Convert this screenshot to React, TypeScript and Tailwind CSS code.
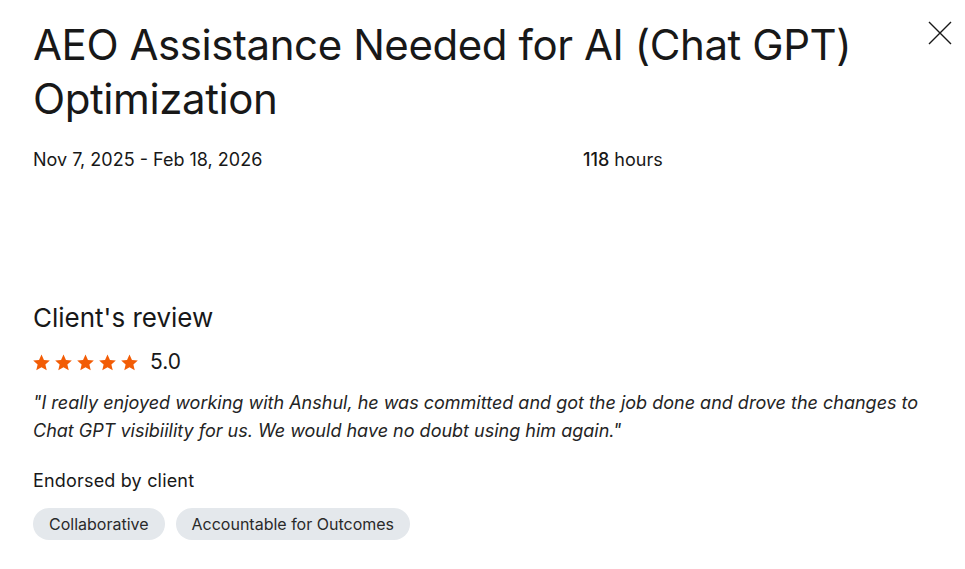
import React from 'react'

const Star: React.FC = () => (
  <svg viewBox="0 0 24 24" className="w-[19px] h-[19px]" fill="#f25c05">
    <path d="M12 1.8l3.1 6.9 7.4.7-5.6 5 1.7 7.4L12 17.9l-6.6 3.9 1.7-7.4-5.6-5 7.4-.7z" />
  </svg>
)

const App: React.FC = () => {
  const tags = ['Collaborative', 'Accountable for Outcomes']

  return (
    <div className="w-full min-h-screen bg-white text-[#181818] font-['Inter',sans-serif]">
      <div className="flex items-start justify-between pl-[33px] pr-[13px] pt-[18px]">
        <h1 className="text-[42px] leading-[54px] font-normal tracking-[-0.01em] max-w-[860px]">
          AEO Assistance Needed for AI (Chat GPT) Optimization
        </h1>
        {/* Close */}
        <button className="mt-[3px] text-[#181818]">
          <svg viewBox="0 0 24 24" className="w-[24px] h-[24px]" fill="none" stroke="currentColor" strokeWidth="1.4">
            <path d="M1 1l22 22M23 1L1 23" />
          </svg>
        </button>
      </div>

      <div className="grid grid-cols-[550px_1fr] px-[33px] mt-[22px] text-[18px] leading-[24px]">
        <span>Nov 7, 2025 - Feb 18, 2026</span>
        <span>
          <span className="font-medium">118</span> hours
        </span>
      </div>

      {/* Client's review */}
      <div className="px-[33px] mt-[130px]">
        <h2 className="text-[26px] leading-[32px] font-normal">Client's review</h2>
        <div className="flex items-center gap-[11px] mt-[16px]">
          <div className="flex gap-[3px] -ml-[1px]">
            {[0, 1, 2, 3, 4].map((i) => (
              <Star key={i} />
            ))}
          </div>
          <span className="text-[21px] leading-[24px]">5.0</span>
        </div>
        <p className="italic text-[18px] leading-[28px] mt-[15px] text-[#242424]">
          "I really enjoyed working with Anshul, he was committed and got the job done and drove the changes to Chat GPT visibiility for us. We would have no doubt using him again."
        </p>

        <p className="text-[18px] leading-[24px] mt-[24px] tracking-[0.01em]">Endorsed by client</p>
        <div className="flex gap-[11px] mt-[15px]">
          {tags.map((t) => (
            <span key={t} className="bg-[#e4e8ec] rounded-full px-[16px] h-[32px] flex items-center text-[16px] text-[#2a2a2a]">
              {t}
            </span>
          ))}
        </div>
      </div>
    </div>
  )
}

export default App
